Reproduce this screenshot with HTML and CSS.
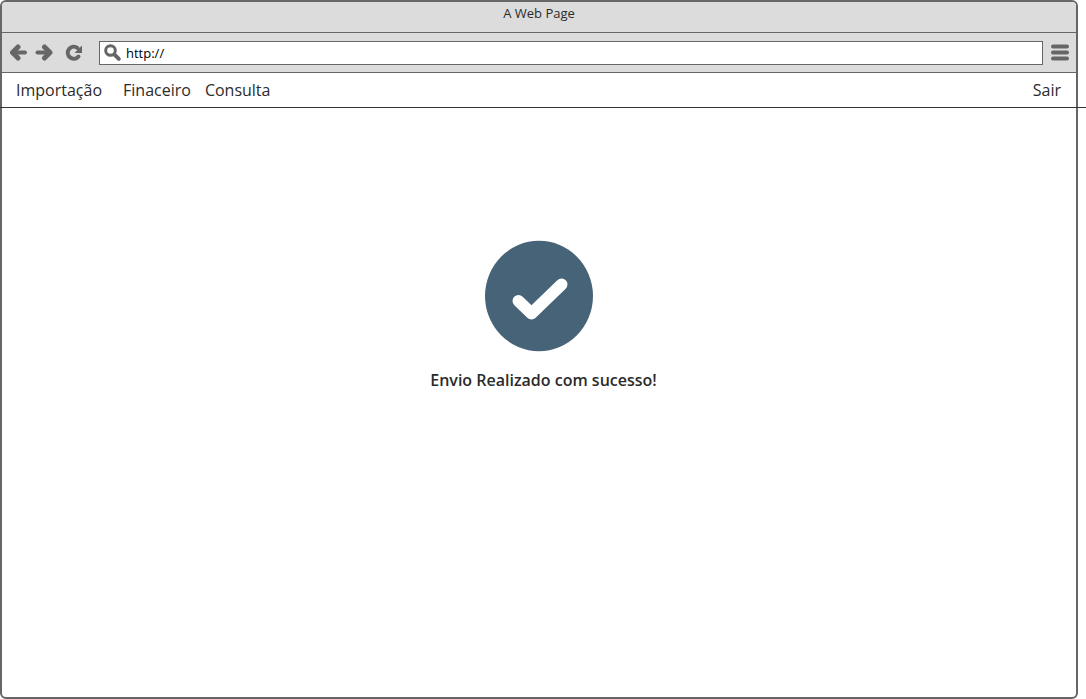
FILE: index.html
```html
<!DOCTYPE html>
<html lang="pt-BR">
<head>
<meta charset="utf-8">
<meta name="viewport" content="width=device-width, initial-scale=1">
<title>A Web Page</title>
<link rel="stylesheet" href="styles.css">
</head>
<body>
<div class="window">
  <header class="titlebar">A Web Page</header>
  <div class="toolbar">
    <button class="tool back" type="button" aria-label="Back">
      <svg width="18" height="18" viewBox="0 0 18 18"><path d="M8 3 2.500 8.500l5.500 5.500" class="head"/><path d="M3 8.500h12" class="stroke"/></svg>
    </button>
    <button class="tool forward" type="button" aria-label="Forward">
      <svg width="18" height="18" viewBox="0 0 18 18"><path d="M9.500 3l5.500 5.500L9.500 14" class="head"/><path d="M14.500 8.500h-12" class="stroke"/></svg>
    </button>
    <button class="tool reload" type="button" aria-label="Reload">
      <svg width="18" height="18" viewBox="0 0 18 18"><path d="M13.500 12.500A6 6 0 1 1 12.500 4" class="arc"/><path d="M17 1.500V9H9.500L12 6.500 14 4.500z" class="solid"/></svg>
    </button>
    <label class="address">
      <svg width="18" height="18" viewBox="0 0 18 18"><circle cx="6.500" cy="6.500" r="4.800" class="lens"/><path d="M10.800 10.800l4 4" class="handle"/></svg>
      <input class="url" type="text" value="http://" aria-label="Address">
    </label>
    <button class="tool menu" type="button" aria-label="Menu">
      <svg width="18" height="18" viewBox="0 0 18 18"><path d="M2 2.500h14M2 8.500h14M2 14.500h14" class="bars"/></svg>
    </button>
  </div>
  <nav class="nav">
    <a class="link first" href="#">Importação</a>
    <a class="link" href="#">Finaceiro</a>
    <a class="link" href="#">Consulta</a>
    <a class="link exit" href="#">Sair</a>
  </nav>
  <main class="content">
    <svg class="badge" width="110" height="112" viewBox="0 0 110 112" role="img" aria-label="Sucesso">
      <ellipse cx="55" cy="56" rx="54" ry="55.200" fill="#466378"/>
      <path d="M34.500 61 47.500 73.500 77.500 44.500" class="check"/>
    </svg>
    <p class="message">Envio Realizado com sucesso!</p>
  </main>
</div>
</body>
</html>
```

FILE: styles.css
```css
* {
  box-sizing: border-box;
}

body {
  margin: 0;
  background: #fff;
  color: #2b2b2b;
  font-family: "Open Sans", "Noto Sans", sans-serif;
  font-size: 16px;
  overflow-x: hidden;
}

svg {
  display: block;
  fill: none;
  stroke-linecap: round;
}

.window {
  display: flex;
  flex-direction: column;
  min-height: 100vh;
  margin-right: 8px;
  border: 2px solid #666;
  border-radius: 6px;
}

.titlebar {
  height: 31px;
  border-bottom: 1px solid #666;
  border-radius: 4px 4px 0 0;
  background: #dcdcdc;
  font-size: 13px;
  line-height: 22px;
  text-align: center;
}

.toolbar {
  display: flex;
  align-items: center;
  height: 40px;
  padding: 0 7px 0 8px;
  border-bottom: 1px solid #666;
  background: #dcdcdc;
}

.tool {
  padding: 0;
  border: 0;
  background: none;
}

.forward {
  margin-left: 7px;
}

.reload {
  margin: 0 16px 0 12px;
}

.menu {
  margin-left: 8px;
}

.stroke,
.head,
.arc,
.lens,
.handle,
.bars {
  stroke: #666;
  stroke-width: 4;
  stroke-linejoin: round;
}

.head {
  stroke-width: 5;
}

.lens {
  stroke-width: 3;
}

.solid {
  fill: #666;
}

.address {
  display: flex;
  flex: 1;
  align-items: center;
  height: 24px;
  padding-left: 4px;
  border: 1px solid #666;
  background: #fff;
}

.url {
  flex: 1;
  min-width: 0;
  padding: 0 4px;
  border: 0;
  outline: 0;
  background: none;
  color: #000;
  font-family: inherit;
  font-size: 13px;
}

.nav {
  position: relative;
  display: flex;
  gap: 14px;
  height: 35px;
  padding: 0 15px 0 14px;
  line-height: 34px;
}

/* The divider runs over the window frame to the edge of the page. */
.nav::after {
  content: "";
  position: absolute;
  right: -10px;
  bottom: 0;
  left: -2px;
  height: 1px;
  background: #333;
}

.link {
  color: inherit;
  text-decoration: none;
}

.first {
  margin-right: 7px;
}

.exit {
  margin-left: auto;
}

.content {
  display: flex;
  flex: 1;
  flex-direction: column;
  align-items: center;
  padding-top: 132px;
}

.check {
  stroke: #fff;
  stroke-width: 12;
  stroke-linejoin: round;
}

.message {
  margin: 17px 0 0 9px;
  font-weight: 600;
  line-height: 22px;
}
```
